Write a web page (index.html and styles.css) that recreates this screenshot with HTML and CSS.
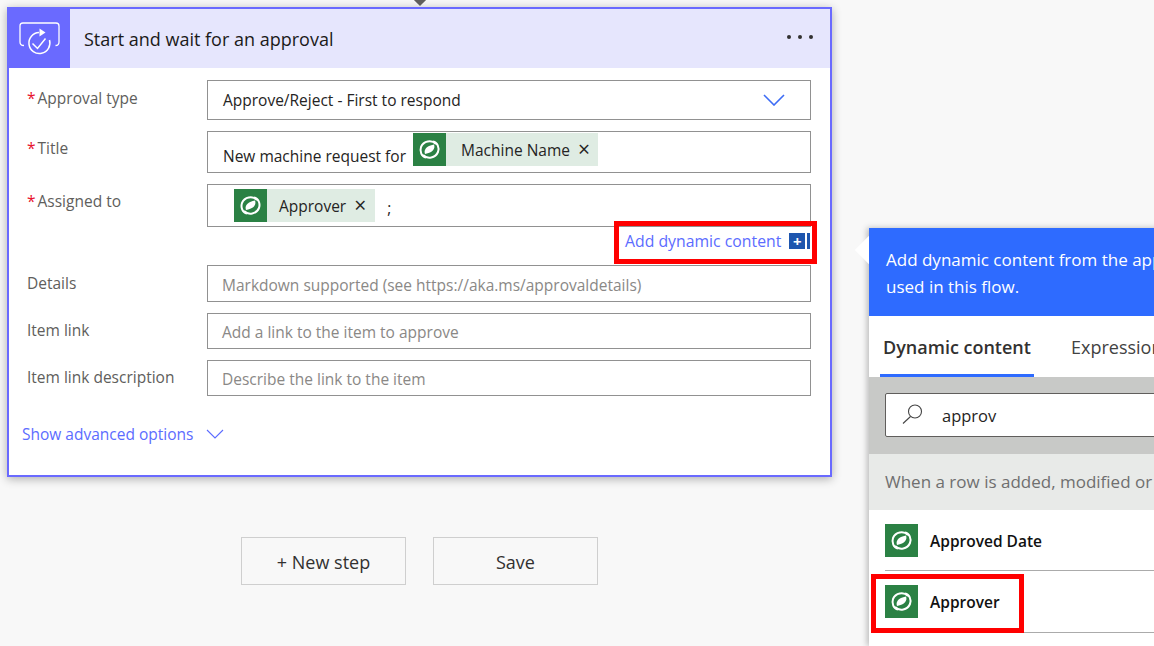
FILE: index.html
```html
<!DOCTYPE html>
<html lang="en">
<head>
    <meta charset="UTF-8">
    <title>Start and wait for an approval</title>
    <link rel="stylesheet" href="styles.css">
</head>
<body>
    <svg class="defs" width="0" height="0">
        <symbol id="dataverse" viewBox="0 0 33 33">
            <g fill="none" stroke="#fff" stroke-width="2">
                <path d="M23 11C18.500 6.500 10.500 8 8 14c-1.500 4.500.5 9.500 5 10.500"/>
                <path d="M10 22c4.500 4.500 12.500 3 15-3 1.500-4.500-.5-9.500-5-10.500"/>
            </g>
            <path fill="#fff" d="M12 21c-1.500-4 1-8 9-9.500 1.500 4-1 8-9 9.500z"/>
        </symbol>
    </svg>

    <span class="connector-tip"></span>

    <div class="canvas">
        <div class="flow">
            <section class="card">
                <header class="card-head">
                    <span class="card-icon">
                        <svg width="42" height="38" viewBox="0 0 42 38" fill="none" stroke="#fff" stroke-width="1.300">
                            <path d="M5 25.500C2 25.500 1 24 1 22V6c0-2 1-3 3-3h33c2 0 3 1 3 3v16c0 2-1 3.500-3.500 3.500"/>
                            <path stroke-width="1.500" d="M30.500 20A10.500 10.500 0 1 1 20 12.500"/>
                            <path fill="#fff" stroke="none" d="M20.500 8.500l6 4-6 4z"/>
                            <path stroke-width="1.500" d="M13.500 23.500l5 5 8-10"/>
                        </svg>
                    </span>
                    <h2 class="card-title">Start and wait for an approval</h2>
                    <span class="dots"><i></i><i></i><i></i></span>
                </header>

                <div class="form">
                    <div class="field field-type">
                        <label class="req">Approval type</label>
                        <div class="input">
                            <span class="value">Approve/Reject - First to respond</span>
                            <svg class="select-arrow" width="22" height="12" viewBox="0 0 22 12" fill="none" stroke="#3d6cf5" stroke-width="1.600"><path d="M1 1l10 10L21 1"/></svg>
                        </div>
                    </div>
                    <div class="field field-title">
                        <label class="req">Title</label>
                        <div class="input">
                            <span class="value value-low">New machine request for</span>
                            <span class="token token-machine">
                                <svg class="token-icon" width="33" height="33"><use href="#dataverse"/></svg>
                                <span class="token-text">Machine Name</span>
                                <span class="token-x">×</span>
                            </span>
                        </div>
                    </div>
                    <div class="field field-assigned">
                        <label class="req">Assigned to</label>
                        <div class="input input-assigned">
                            <span class="token">
                                <svg class="token-icon" width="33" height="33"><use href="#dataverse"/></svg>
                                <span class="token-text">Approver</span>
                                <span class="token-x">×</span>
                            </span>
                            <span class="value semi">;</span>
                        </div>
                        <a class="add-dynamic">
                            Add dynamic content
                            <span class="add-icon">+</span>
                            <span class="add-bar"></span>
                        </a>
                    </div>
                    <div class="field field-opt">
                        <label>Details</label>
                        <div class="input"><span class="placeholder">Markdown supported (see https://aka.ms/approvaldetails)</span></div>
                    </div>
                    <div class="field field-opt field-36">
                        <label>Item link</label>
                        <div class="input"><span class="placeholder">Add a link to the item to approve</span></div>
                    </div>
                    <div class="field field-opt field-36">
                        <label>Item link description</label>
                        <div class="input"><span class="placeholder">Describe the link to the item</span></div>
                    </div>
                    <a class="advanced">
                        Show advanced options
                        <svg width="18" height="10" viewBox="0 0 18 10" fill="none" stroke="#5c6cff" stroke-width="1.100"><path d="M1 1l8 8 8-8"/></svg>
                    </a>
                </div>
            </section>

            <div class="actions">
                <button class="btn">+ New step</button>
                <button class="btn">Save</button>
            </div>
        </div>

        <aside class="panel">
            <span class="panel-beak"></span>
            <div class="panel-head">Add dynamic content from the apps and connectors used in this flow.</div>
            <div class="tabs">
                <span class="tab tab-active">Dynamic content</span>
                <span class="tab">Expression</span>
            </div>
            <div class="search-band">
                <div class="search">
                    <svg width="22" height="22" viewBox="0 0 22 22" fill="none" stroke="#444" stroke-width="1.100"><circle cx="13" cy="7.500" r="6.500"/><path d="M8.500 12.500l-7.500 7"/></svg>
                    <span>approv</span>
                </div>
            </div>
            <div class="group-head">When a row is added, modified or deleted</div>
            <div class="result">
                <svg class="token-icon" width="33" height="33"><use href="#dataverse"/></svg>
                <span class="result-text">Approved Date</span>
            </div>
            <div class="result result-marked">
                <svg class="token-icon" width="33" height="33"><use href="#dataverse"/></svg>
                <span class="result-text">Approver</span>
                <span class="mark"></span>
            </div>
        </aside>
    </div>
</body>
</html>
```

FILE: styles.css
```css
html, body {
    margin: 0;
    height: 646px;
    overflow: hidden;
}
body {
    position: relative;
    background-color: #f8f8f8;
    font-family: "Open Sans", "Noto Sans", sans-serif;
    font-size: 15.500px;
    color: #252423;
}
.defs {
    position: absolute;
}
.canvas {
    display: flex;
    align-items: flex-start;
    padding-left: 7px;
}
.connector-tip {
    position: absolute;
    left: 415px;
    top: -6px;
    width: 10px;
    height: 10px;
    background-color: #605e5c;
    transform: rotate(45deg);
}

/* card */
.flow {
    width: 825px;
    flex: none;
    padding-top: 7px;
}
.card {
    height: 470px;
    box-sizing: border-box;
    border: 2px solid #6a6aff;
    background-color: #fff;
    box-shadow: 0 2px 9px rgba(0, 0, 0, 0.3);
}
.card-head {
    display: flex;
    align-items: center;
    height: 59px;
    background-color: #e6e6fd;
}
.card-icon {
    display: flex;
    align-items: center;
    justify-content: center;
    width: 61px;
    height: 59px;
    background-color: #6a6aff;
}
.card-title {
    flex: 1;
    margin: 0 0 0 14px;
    font-size: 18px;
    font-weight: 400;
    color: #1b1a19;
}
.dots {
    display: flex;
    gap: 7px;
    margin-right: 17px;
    margin-bottom: 3px;
}
.dots i {
    width: 4px;
    height: 4px;
    border-radius: 50%;
    background-color: #323130;
}

/* form */
.form {
    padding: 12px 19px 0 18px;
}
.field {
    position: relative;
    display: grid;
    grid-template-columns: 180px 1fr;
    margin-bottom: 11px;
}
label {
    padding-top: 7px;
    color: #605e5c;
}
.req::before {
    content: "*";
    margin-right: 2px;
    color: #e8112d;
}
.input {
    display: flex;
    align-items: center;
    box-sizing: border-box;
    border: 1px solid #919191;
    padding: 0 15px;
    background-color: #fff;
    color: #252423;
}
.field-type .input {
    height: 40px;
    justify-content: space-between;
    padding-right: 25px;
}
.field-title .input {
    height: 42px;
}
.field-assigned {
    margin-bottom: 38px;
}
.field-assigned .input {
    height: 43px;
    padding-left: 26px;
}
.field-opt .input {
    height: 37px;
    padding-left: 14px;
}
.field-36 .input {
    height: 36px;
}
.field-36 label {
    padding-top: 6px;
}
.field-title label, .field-assigned label {
    padding-top: 6px;
}
.value-low {
    padding-top: 7px;
}
.semi {
    margin: 5px 0 0 12px;
}
.placeholder {
    padding-top: 2px;
    color: #8a8886;
}
.token {
    display: flex;
    align-items: center;
    height: 33px;
    margin-left: 7px;
    background-color: #dfece3;
}
.token-machine {
    align-self: flex-start;
    margin-top: 1px;
}
.token-machine .token-text {
    margin-left: 15px;
}
.token-machine .token-x {
    margin-right: 8px;
}
.input-assigned .token {
    margin-left: 0;
}
.token-icon {
    flex: none;
    display: block;
    background-color: #2b8144;
}
.token-text {
    margin-left: 12px;
}
.token-x {
    margin: 0 9px 0 8px;
    font-size: 21px;
    line-height: 1;
}

/* link with its red marking */
.add-dynamic {
    position: absolute;
    right: -6px;
    top: 37px;
    display: flex;
    align-items: center;
    box-sizing: border-box;
    width: 203px;
    height: 43px;
    border: 5px solid #f00;
    padding: 0 0 4px 6px;
    color: #5c6cff;
    font-size: 15.800px;
    white-space: nowrap;
}
.add-icon {
    display: flex;
    align-items: center;
    justify-content: center;
    width: 16px;
    height: 16px;
    margin-left: 8px;
    background-color: #1e56ae;
    color: #fff;
    font-size: 15px;
    font-weight: 700;
}
.add-bar {
    width: 3px;
    height: 16px;
    margin-left: 2px;
    background-color: #1e56ae;
}
.advanced {
    display: flex;
    align-items: center;
    gap: 13px;
    margin: 27px 0 0 -5px;
    color: #5c6cff;
    white-space: nowrap;
}

/* bottom buttons */
.actions {
    display: flex;
    gap: 27px;
    margin: 60px 0 0 234px;
}
.btn {
    box-sizing: border-box;
    width: 165px;
    height: 48px;
    border: 1px solid #cfcfcf;
    padding-top: 2px;
    background-color: #f8f8f8;
    font-family: inherit;
    font-size: 18px;
    color: #323130;
}

/* dynamic content panel */
.panel {
    position: relative;
    flex: none;
    width: 520px;
    height: 418px;
    margin: 228px 0 0 37px;
    background-color: #fff;
    box-shadow: -2px 0 6px rgba(0, 0, 0, 0.25);
}
.panel-beak {
    position: absolute;
    left: -10px;
    top: 12px;
    width: 20px;
    height: 20px;
    background-color: #fff;
    transform: rotate(45deg);
}
.panel-head {
    position: relative;
    box-sizing: border-box;
    height: 88px;
    padding: 18px 63px 0 17px;
    background-color: #2e6bff;
    color: #fff;
    font-size: 17px;
    line-height: 27px;
}
.tabs {
    display: flex;
    height: 61px;
}
.tab {
    box-sizing: border-box;
    padding: 19px 4px 0;
    font-size: 18px;
    color: #424242;
}
.tab-active {
    width: 154px;
    margin: 0 33px 0 11px;
    padding-left: 3px;
    border-bottom: 3px solid #2e6bff;
    font-weight: 600;
    color: #323130;
    white-space: nowrap;
}
.search-band {
    height: 77px;
    box-sizing: border-box;
    padding: 16px 0 0 16px;
    background-color: #c8c9c7;
}
.search {
    display: flex;
    align-items: center;
    gap: 18px;
    box-sizing: border-box;
    height: 44px;
    border: 1px solid #605e5c;
    border-radius: 2px;
    padding-left: 16px;
    background-color: #fff;
    font-size: 16.500px;
}
.group-head {
    box-sizing: border-box;
    height: 56px;
    padding: 16px 0 0 16px;
    background-color: #e8eae8;
    color: #6f6f6f;
    font-size: 17px;
    white-space: nowrap;
}
.result {
    position: relative;
    display: flex;
    align-items: center;
    gap: 12px;
    box-sizing: border-box;
    height: 61px;
    margin-left: 16px;
    border-bottom: 1px solid #ababab;
    font-weight: 600;
    font-size: 15.500px;
    color: #111;
}
.result-text {
    padding-top: 1px;
}
.result-marked {
    height: 62px;
}
.mark {
    position: absolute;
    left: -14px;
    top: 3px;
    box-sizing: border-box;
    width: 153px;
    height: 59px;
    border: 5px solid #f00;
}
```
